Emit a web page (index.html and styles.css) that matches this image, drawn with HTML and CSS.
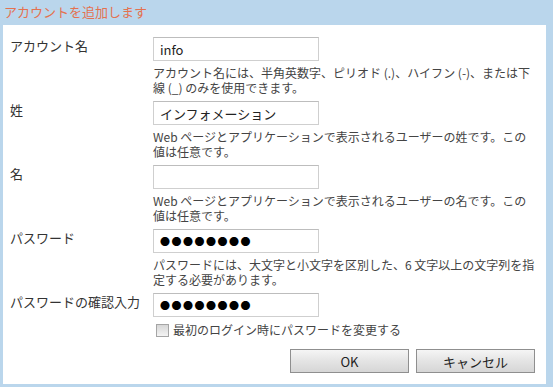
FILE: index.html
```html
<!DOCTYPE html>
<html lang="ja">
<head>
    <meta charset="UTF-8">
    <title>アカウントを追加します</title>
    <link rel="stylesheet" href="styles.css">
</head>
<body>
    <div class="dialog">
        <div class="dialog-title">アカウントを追加します</div>
        <form class="dialog-body">
            <div class="row">
                <label class="row-label">アカウント名</label>
                <div class="row-field">
                    <input class="text-box" type="text" value="info">
                    <p class="help">アカウント名には、半角英数字、ピリオド (.)、ハイフン (-)、または下線 (_) のみを使用できます。</p>
                </div>
            </div>
            <div class="row">
                <label class="row-label">姓</label>
                <div class="row-field">
                    <input class="text-box" type="text" value="インフォメーション">
                    <p class="help">Web ページとアプリケーションで表示されるユーザーの姓です。この値は任意です。</p>
                </div>
            </div>
            <div class="row">
                <label class="row-label">名</label>
                <div class="row-field">
                    <input class="text-box" type="text" value="">
                    <p class="help">Web ページとアプリケーションで表示されるユーザーの名です。この値は任意です。</p>
                </div>
            </div>
            <div class="row">
                <label class="row-label">パスワード</label>
                <div class="row-field">
                    <input class="text-box pass" type="text" value="●●●●●●●●">
                    <p class="help">パスワードには、大文字と小文字を区別した、6 文字以上の文字列を指定する必要があります。</p>
                </div>
            </div>
            <div class="row">
                <label class="row-label">パスワードの確認入力</label>
                <div class="row-field">
                    <input class="text-box pass" type="text" value="●●●●●●●●">
                    <div class="check">
                        <span class="check-box"></span>
                        <span>最初のログイン時にパスワードを変更する</span>
                    </div>
                </div>
            </div>
            <div class="buttons">
                <button type="button" class="btn">OK</button>
                <button type="button" class="btn">キャンセル</button>
            </div>
        </form>
    </div>
</body>
</html>
```

FILE: styles.css
```css
html, body {
    margin: 0;
    padding: 0;
}

body {
    background-color: #bad6ec;
    font-family: "Noto Sans CJK JP", "Liberation Sans", sans-serif;
    color: #333;
    width: 553px;
    height: 387px;
    overflow: hidden;
}

.dialog {
    padding: 0 7px 3px 3px;
}

.dialog-title {
    height: 25px;
    line-height: 23px;
    padding-left: 1px;
    font-size: 13px;
    color: #e4714f;
}

.dialog-body {
    background-color: #fff;
    height: 347px;
    padding: 12px 0 0 7px;
    margin: 0;
}

.row {
    display: grid;
    grid-template-columns: 143px 385px;
}

.row-label {
    font-size: 13px;
    line-height: 18px;
    color: #333;
}

.text-box {
    display: block;
    box-sizing: border-box;
    width: 166px;
    height: 24px;
    margin: 0;
    padding: 0 6px;
    border: 1px solid #cfcfcf;
    border-top-color: #bdbdbd;
    font-family: "Noto Sans CJK JP", sans-serif;
    font-size: 13px;
    color: #222;
    background: #fff;
}

.text-box.pass {
    font-size: 10px;
    letter-spacing: 1.5px;
    color: #000;
}

.help {
    margin: 4px 0 6px;
    font-size: 12px;
    line-height: 15px;
    color: #444;
}

.check {
    display: flex;
    align-items: center;
    gap: 4px;
    margin-top: 5px;
    font-size: 12px;
    line-height: 16px;
    color: #444;
}

.check-box {
    width: 11px;
    height: 11px;
    margin-left: 3px;
    border: 1px solid #a5a5a5;
    background: linear-gradient(#d6d6d6, #f4f4f4);
}

.buttons {
    display: flex;
    gap: 7px;
    margin: 11px 0 0 280px;
}

.btn {
    width: 119px;
    height: 24px;
    padding: 0;
    border: 1px solid #8f8f8f;
    background: linear-gradient(#f5f5f5, #e4e4e4 50%, #d6d6d6);
    font-family: "Noto Sans CJK JP", sans-serif;
    font-size: 13px;
    color: #222;
}
```
